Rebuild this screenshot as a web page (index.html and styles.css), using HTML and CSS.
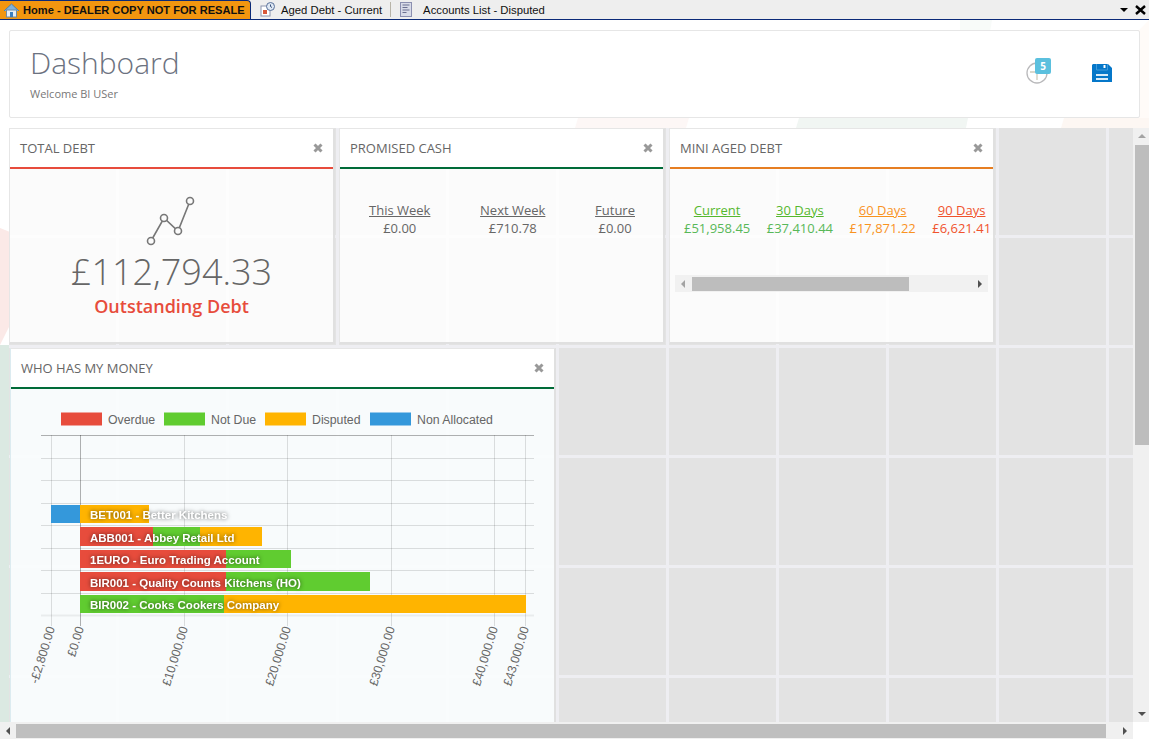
FILE: index.html
```html
<!DOCTYPE html>
<html lang="en">
<head>
<meta charset="utf-8">
<title>Dashboard</title>
<link rel="stylesheet" href="styles.css">
</head>
<body>
<nav class="tabbar">
  <div class="tab tab-home">
    <svg class="tab-icon" width="17" height="16" viewBox="0 0 17 16"><path d="M1 9 8.500 2 16 9" fill="#7fb2dc" stroke="#4d7fa8"/><rect x="3.500" y="8" width="10" height="7" fill="#e8eef4" stroke="#6f8ba3"/><rect x="7" y="10" width="3" height="5" fill="#3d7fbf"/></svg>
    <span>Home - DEALER COPY NOT FOR RESALE</span>
  </div>
  <div class="tab tab-aged">
    <svg class="tab-icon" width="15" height="15" viewBox="0 0 15 15"><rect x="1" y="4" width="9" height="10" fill="#fff" stroke="#8a94ad"/><rect x="3" y="8" width="4" height="4" fill="#d8583a"/><circle cx="10.500" cy="4.500" r="4" fill="#dfe8f3" stroke="#59719a"/><path d="M10.500 2.500v2l1.500 1" fill="none" stroke="#334d78"/></svg>
    <span>Aged Debt - Current</span>
  </div>
  <div class="tab-sep"></div>
  <div class="tab tab-list">
    <svg class="tab-icon" width="12" height="15" viewBox="0 0 12 15"><rect x=".5" y=".5" width="11" height="14" fill="#d8dbe8" stroke="#8b8fb0"/><path d="M2.500 3h7M2.500 5.500h5M2.500 8h7M2.500 10.500h4" stroke="#6a6f90"/></svg>
    <span>Accounts List - Disputed</span>
  </div>
  <div class="tab-tools">
    <span class="tool-arrow"></span>
    <svg width="11" height="10" viewBox="0 0 11 10"><path d="M1 1 10 9M10 1 1 9" stroke="#000" stroke-width="2.400"/></svg>
  </div>
</nav>

<div class="viewport">
  <svg class="watermark" width="1149" height="739" viewBox="0 0 1149 739" aria-hidden="true">
    <path d="M0 228 10 232V325L0 345Z" fill="#fbe9e7"/>
    <path d="M0 345 10 345V722H0Z" fill="#dbe9e2"/>
    <path d="M578 118H689L686 128H575Z" fill="#fdf7f6"/>
    <path d="M799 118H968L966 128H796Z" fill="#f1f6f3"/>
    <path d="M1064 118H1149V128H1061Z" fill="#fdf7f3"/>
    <path d="M960 20H992L975 118H960Z" fill="#f8fbf9"/>
    <path d="M1090 118 1100 70 1149 20V118Z" fill="#fffbf8"/>
  </svg>

  <div class="content">
    <header class="page-head">
      <div class="page-title">
        <h1>Dashboard</h1>
        <p>Welcome BI USer</p>
      </div>
      <div class="head-actions">
        <div class="clock-wrap">
          <svg width="24" height="24" viewBox="0 0 24 24"><circle cx="11" cy="13" r="10" fill="none" stroke="#b9b9bb" stroke-width="1.300"/><path d="M4 12H11V20" fill="none" stroke="#cfccbc" stroke-width="1.300"/></svg>
          <span class="badge">5</span>
        </div>
        <svg class="save" width="20" height="18" viewBox="0 0 20 18"><path d="M1 0H16L20 4V18H0V1Z" fill="#0577c9"/><path d="M4.500 0V6H15.500V0" fill="none" stroke="#3f9adb"/><rect x="11.500" y="1" width="2" height="3" fill="#fff"/><rect x="4" y="10" width="12" height="2" fill="#d6eaf8"/><rect x="4" y="14" width="12" height="2" fill="#d6eaf8"/></svg>
      </div>
    </header>

    <section class="board">
      <article class="tile tile-total">
        <header class="tile-head head-red"><h2>TOTAL DEBT</h2><svg class="close" width="10" height="10" viewBox="0 0 10 10"><path d="M1.500 1.500 8.500 8.500M8.500 1.500 1.500 8.500" stroke="#999" stroke-width="3"/></svg></header>
        <div class="tile-body total-body">
          <svg class="trend" width="50" height="52" viewBox="0 0 50 52"><path d="M6 46 19 23 33 36 45 6" fill="none" stroke="#777" stroke-width="1.600"/><g fill="#fbfbfb" stroke="#777" stroke-width="1.600"><circle cx="6" cy="46" r="3.500"/><circle cx="19" cy="23" r="3.500"/><circle cx="33" cy="36" r="3.500"/><circle cx="45" cy="6" r="3.500"/></g></svg>
          <div class="amount">£112,794.33</div>
          <div class="amount-label">Outstanding Debt</div>
        </div>
      </article>

      <article class="tile tile-promised">
        <header class="tile-head head-green"><h2>PROMISED CASH</h2><svg class="close" width="10" height="10" viewBox="0 0 10 10"><path d="M1.500 1.500 8.500 8.500M8.500 1.500 1.500 8.500" stroke="#999" stroke-width="3"/></svg></header>
        <div class="tile-body promised-body">
          <div class="stat"><a>This Week</a><span>£0.00</span></div>
          <div class="stat"><a>Next Week</a><span>£710.78</span></div>
          <div class="stat"><a>Future</a><span>£0.00</span></div>
        </div>
      </article>

      <article class="tile tile-mini">
        <header class="tile-head head-orange"><h2>MINI AGED DEBT</h2><svg class="close" width="10" height="10" viewBox="0 0 10 10"><path d="M1.500 1.500 8.500 8.500M8.500 1.500 1.500 8.500" stroke="#999" stroke-width="3"/></svg></header>
        <div class="tile-body mini-body">
          <div class="mini-row">
            <div class="stat c-current"><a>Current</a><span>£51,958.45</span></div>
            <div class="stat c-thirty"><a>30 Days</a><span>£37,410.44</span></div>
            <div class="stat c-sixty"><a>60 Days</a><span>£17,871.22</span></div>
            <div class="stat c-ninety"><a>90 Days</a><span>£6,621.41</span></div>
          </div>
          <div class="hscroll">
            <span class="arrow-left"></span>
            <span class="hthumb"></span>
            <span class="arrow-right"></span>
          </div>
        </div>
      </article>

      <article class="tile tile-money">
        <header class="tile-head head-green"><h2>WHO HAS MY MONEY</h2><svg class="close" width="10" height="10" viewBox="0 0 10 10"><path d="M1.500 1.500 8.500 8.500M8.500 1.500 1.500 8.500" stroke="#999" stroke-width="3"/></svg></header>
        <div class="tile-body money-body">
          <svg class="chart" width="544" height="340" viewBox="11 389 544 340">
            <g class="legend">
              <rect x="61" y="412.500" width="41" height="13" fill="#e74c3c"/><text x="108" y="424">Overdue</text>
              <rect x="164" y="412.500" width="41" height="13" fill="#60cc30"/><text x="211" y="424">Not Due</text>
              <rect x="265" y="412.500" width="41" height="13" fill="#ffb400"/><text x="312" y="424">Disputed</text>
              <rect x="370" y="412.500" width="41" height="13" fill="#3498db"/><text x="417" y="424">Non Allocated</text>
            </g>
            <g class="grid">
              <path d="M41 458.500H534M41 480.500H534M41 503.500H534M41 525.500H534M41 548.500H534M41 570.500H534M41 593.500H534"/>
              <path d="M51.500 435V626M184.500 435V626M287.500 435V626M391.500 435V626M494.500 435V626M525.500 435V626"/>
              <path class="axis" d="M41 435.500H534M80.500 435V626"/>
              <path class="base" d="M41 615.500H534"/>
            </g>
            <g class="bars">
              <rect x="51" y="505" width="29" height="18" fill="#3498db"/><rect x="80" y="505" width="69" height="18" fill="#ffb400"/>
              <rect x="80" y="527" width="73" height="19" fill="#e74c3c"/><rect x="153" y="527" width="47" height="19" fill="#60cc30"/><rect x="200" y="527" width="62" height="19" fill="#ffb400"/>
              <rect x="80" y="550" width="146" height="18" fill="#e74c3c"/><rect x="226" y="550" width="65" height="18" fill="#60cc30"/>
              <rect x="80" y="572" width="146" height="19" fill="#e74c3c"/><rect x="226" y="572" width="144" height="19" fill="#60cc30"/>
              <rect x="80" y="595" width="144" height="18" fill="#60cc30"/><rect x="224" y="595" width="302" height="18" fill="#ffb400"/>
            </g>
            <g class="labels">
              <text x="90" y="519">BET001 - Better Kitchens</text>
              <text x="90" y="541.500">ABB001 - Abbey Retail Ltd</text>
              <text x="90" y="564">1EURO - Euro Trading Account</text>
              <text x="90" y="587">BIR001 - Quality Counts Kitchens (HO)</text>
              <text x="90" y="609">BIR002 - Cooks Cookers Company</text>
            </g>
            <g class="ticks">
              <text transform="translate(55 628) rotate(-73)">-£2,800.00</text>
              <text transform="translate(84 628) rotate(-73)">£0.00</text>
              <text transform="translate(188 628) rotate(-73)">£10,000.00</text>
              <text transform="translate(291 628) rotate(-73)">£20,000.00</text>
              <text transform="translate(395 628) rotate(-73)">£30,000.00</text>
              <text transform="translate(498 628) rotate(-73)">£40,000.00</text>
              <text transform="translate(529 628) rotate(-73)">£43,000.00</text>
            </g>
          </svg>
        </div>
      </article>
    </section>
  </div>

  <div class="vscroll">
    <span class="arrow-up"></span>
    <span class="vthumb"></span>
    <span class="arrow-down"></span>
  </div>
</div>

<div class="bottom">
  <div class="bscroll">
    <span class="arrow-left dark"></span>
    <span class="bthumb"></span>
    <span class="arrow-right dark"></span>
  </div>
  <div class="corner"></div>
</div>
</body>
</html>
```

FILE: styles.css
```css
* { box-sizing: border-box; }
html, body { margin: 0; height: 100%; }
body {
  width: 1149px;
  height: 739px;
  overflow: hidden;
  display: flex;
  flex-direction: column;
  background: #fff;
  font-family: "Open Sans", sans-serif;
  color: #666;
}

/* Tab strip */
.tabbar {
  flex: none;
  height: 20px;
  display: flex;
  align-items: center;
  background: #eeeeee;
  border-bottom: 1px solid #0b2a78;
  font: 11.300px "Liberation Sans", Arial, sans-serif;
  color: #111;
  white-space: nowrap;
}
.tab { display: flex; align-items: center; height: 100%; }
.tab-home {
  width: 251px;
  padding-left: 3px;
  gap: 3px;
  background: #f2960f;
  font-weight: 700;
  font-size: 11.100px;
  border-top: 1px solid #0b2a78;
  border-right: 1px solid #0b2a78;
  border-top-right-radius: 4px;
}
.tab-aged { margin-left: 9px; gap: 6px; }
.tab-sep { width: 1px; height: 15px; margin: 0 9px 0 8px; background: #b8b4a8; }
.tab-list { gap: 11px; }
.tab-icon { flex: none; }
.tab-tools { margin-left: auto; margin-right: 3px; display: flex; align-items: center; gap: 7px; }
.tool-arrow { width: 0; height: 0; border: 4px solid transparent; border-top: 4px solid #000; border-bottom: 0; }

/* Main */
.viewport { flex: 1; min-height: 0; display: flex; position: relative; }
.watermark { position: absolute; left: 0; top: -20px; pointer-events: none; }
.content { position: relative; flex: 1; min-width: 0; overflow: hidden; padding: 10px 0 0 9px; }

.page-head {
  width: 1131px;
  height: 88px;
  display: flex;
  justify-content: space-between;
  background: #fff;
  border: 1px solid #e6e6e6;
  border-radius: 2px;
}
.page-title { padding: 13px 0 0 20px; }
.page-title h1 { margin: 0; font-size: 30px; line-height: 38px; font-weight: 300; color: #6c7280; }
.page-title p { margin: 4px 0 0; font-size: 11px; line-height: 15px; color: #777; }
.head-actions { display: flex; align-items: flex-start; padding: 27px 27px 0 0; gap: 40px; }
.clock-wrap { position: relative; width: 26px; height: 26px; margin-top: 2px; }
.badge {
  position: absolute;
  left: 9px;
  top: -2px;
  width: 16px;
  height: 16px;
  border-radius: 2px;
  background: #5bc0de;
  color: #fff;
  font-size: 10px;
  font-weight: 700;
  line-height: 16px;
  text-align: center;
}
.save { margin-top: 6px; }

/* Tile board over its cell canvas */
.board {
  height: 605px;
  margin-top: 10px;
  display: grid;
  grid-template-columns: repeat(10, 105px);
  grid-auto-rows: 105px;
  gap: 5px;
  align-content: start;
  background-color: #e3e3e3;
  background-image:
    linear-gradient(#eeeef2 3px, transparent 3px),
    linear-gradient(90deg, #eeeef2 3px, transparent 3px);
  background-size: 110px 110px;
  background-position: -3px 107px;
  overflow: hidden;
}
.tile {
  display: flex;
  flex-direction: column;
  width: calc(100% + 1px);
  height: calc(100% + 1px);
  background: rgba(255, 255, 255, .86);
  border-style: solid;
  border-width: 1px 2px 2px 1px;
  border-color: #e6e6e6 #e0e0e0 #e0e0e0 #e6e6e6;
}
.tile-total, .tile-promised, .tile-mini { grid-column: span 3; grid-row: span 2; }
.tile-money {
  grid-column: span 5;
  grid-row: span 4;
  margin-left: 1px;
  background: rgba(249, 252, 253, .97);
  border-left-color: #dcebf0;
}
.tile-head {
  flex: none;
  height: 40px;
  display: flex;
  align-items: center;
  justify-content: space-between;
  padding: 0 10px;
  background: #fff;
  border-bottom: 2px solid;
}
.tile-head h2 { margin: 0; font-size: 13px; font-weight: 400; color: #666; }
.head-red { border-color: #e74c3c; }
.head-green { border-color: #006b38; }
.head-orange { border-color: #e67e22; }
.close { flex: none; }
.tile-body { flex: 1; min-height: 0; }

.total-body { display: flex; flex-direction: column; align-items: center; padding-top: 26px; }
.trend { margin: 0 4px 2px 0; }
.amount { font-size: 36px; line-height: 46px; font-weight: 300; color: #666; }
.amount-label { font-size: 18px; line-height: 22px; font-weight: 600; color: #e74c3c; }

.stat { display: flex; flex-direction: column; align-items: center; font-size: 13px; line-height: 18px; }
.stat a { text-decoration: underline; }
.promised-body { display: flex; justify-content: space-between; padding: 32px 28px 0 29px; }
.promised-body .stat { color: #666; }

.mini-body { padding: 32px 5px 0 5px; }
.mini-row { display: flex; gap: 16.500px; padding-left: 9px; height: 74px; }
.mini-row .stat { flex: none; }
.c-current a, .c-thirty a { color: #55b82e; }
.c-current span, .c-thirty span { color: #58b858; }
.c-sixty a, .c-sixty span { color: #f9931f; }
.c-ninety a, .c-ninety span { color: #f0532d; }

.hscroll {
  height: 17px;
  display: flex;
  align-items: center;
  background: #f1f1f1;
  padding-right: 6px;
}
.hthumb { width: 217px; height: 14px; margin-left: 7px; background: #bdbdbd; }
.arrow-left, .arrow-right, .arrow-up, .arrow-down { width: 0; height: 0; border-style: solid; border-color: transparent; display: block; flex: none; }
.arrow-left { margin-left: 6px; border-width: 4px 4px 4px 0; border-right-color: #a3a3a3; }
.arrow-right { margin-left: auto; border-width: 4px 0 4px 4px; border-left-color: #505050; }
.arrow-left.dark { border-right-color: #505050; }
.arrow-up { border-width: 0 4px 4px; border-bottom-color: #a3a3a3; }
.arrow-down { border-width: 4px 4px 0; border-top-color: #505050; margin-top: auto; margin-bottom: 6px; }

.money-body { overflow: hidden; }
.chart { display: block; }
.legend text { font: 12.300px "Liberation Sans", Arial, sans-serif; fill: #666; }
.grid path { fill: none; stroke: rgba(0, 0, 0, .12); stroke-width: 1; }
.grid .axis { stroke: rgba(0, 0, 0, .3); }
.grid .base { stroke: rgba(0, 0, 0, .06); stroke-width: 2; }
.labels text {
  font: 700 11.500px "Liberation Sans", Arial, sans-serif;
  fill: #fff;
  filter: drop-shadow(0 0 2px rgba(0, 0, 0, .6));
}
.ticks text { font: 12.300px "Liberation Sans", Arial, sans-serif; fill: #666; text-anchor: end; }

/* Window scrollbars */
.vscroll {
  position: absolute;
  right: 0;
  top: 108px;
  bottom: 0;
  width: 16px;
  display: flex;
  flex-direction: column;
  align-items: center;
  padding-top: 6px;
  padding-left: 2px;
  background: #f0f0f0;
}
.vthumb { width: 14px; height: 300px; margin-top: 7px; background: #bdbdbd; }
.bottom { flex: none; height: 17px; display: flex; }
.bscroll { flex: 1; display: flex; align-items: center; background: #f0f0f0; }
.bthumb { width: 1090px; height: 14px; margin-left: 6px; background: #bfbfbf; }
.bscroll .arrow-right { margin-left: auto; margin-right: 6px; }
.corner { width: 16px; background: #fff; }
```
